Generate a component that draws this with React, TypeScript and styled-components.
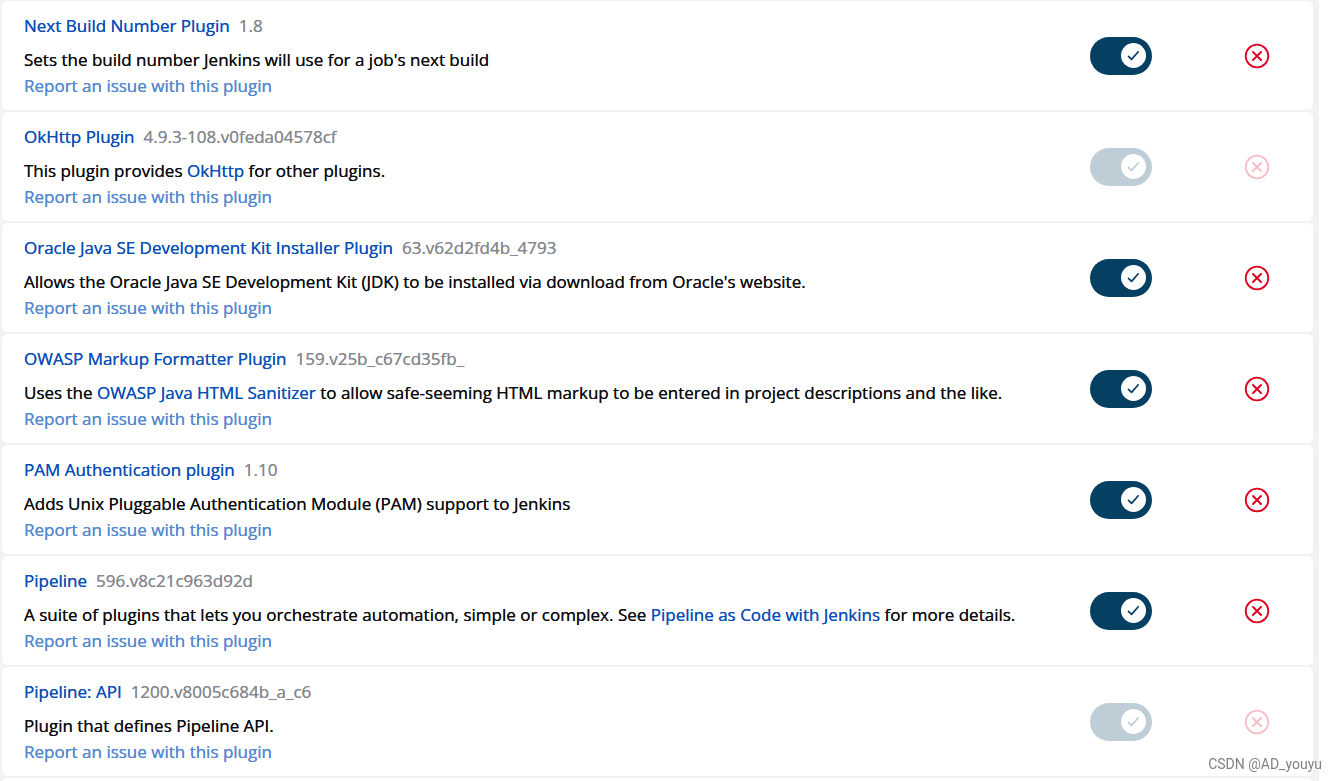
import React, { useState } from "react";
import styled, { createGlobalStyle } from "styled-components";

const GlobalStyle = createGlobalStyle`
  *, *::before, *::after { box-sizing: border-box; }
  html, body { margin: 0; background: #fff; }
  body {
    font-family: "Segoe UI", "Open Sans", "Noto Sans", sans-serif;
    font-size: 17px;
    font-weight: 500;
    line-height: 26px;
    color: #14141f;
  }
`;

const Page = styled.main`
  height: 100vh;
  overflow: hidden;
  padding-right: 18px;
`;

const Panel = styled.div`
  min-height: 100%;
  padding: 1px 6px 0 2px;
  background: #f2f2f2;
`;

const PluginTable = styled.table`
  width: 100%;
  border-collapse: separate;
  border-spacing: 0;
  table-layout: fixed;
`;

const ToggleColumn = styled.col`
  width: 160px;
`;

const UninstallColumn = styled.col`
  width: 112px;
`;

const Cell = styled.td<{ $align?: "left" | "center" }>`
  height: 111px;
  padding: 0;
  border-bottom: 2px solid transparent;
  text-align: ${({ $align }) => $align ?? "left"};
  vertical-align: middle;
  background: #fff;
  background-clip: padding-box;

  &:first-child {
    border-top-left-radius: 5px;
    border-bottom-left-radius: 5px 7px;
  }
  &:last-child {
    border-top-right-radius: 5px;
    border-bottom-right-radius: 5px 7px;
  }
`;

const Details = styled.div`
  padding: 0 22px;
`;

const Heading = styled.div`
  display: flex;
  gap: 9px;
  margin-bottom: 8px;
`;

/* The unblurred shadow thickens the regular face to a medium weight. */
const Link = styled.a`
  color: #084fb8;
  text-decoration: none;
  text-shadow: 0 0 0 currentColor;
`;

const Version = styled.span`
  color: #85888e;
  text-shadow: 0 0 0 currentColor;
`;

const Description = styled.div`
  color: #0d0d10;
  text-shadow: 0 0 0 currentColor;
`;

const ReportLink = styled(Link)`
  display: block;
  width: fit-content;
  color: #5488cf;
`;

const Toggle = styled.label<{ $locked: boolean }>`
  display: inline-grid;
  align-items: center;
  justify-items: end;
  vertical-align: middle;
  opacity: ${({ $locked }) => ($locked ? 0.25 : 1)};
`;

const ToggleInput = styled.input`
  grid-area: 1 / 1;
  appearance: none;
  width: 62px;
  height: 38px;
  margin: 0;
  border-radius: 19px;
  background: #053f61;
`;

const Knob = styled.span`
  grid-area: 1 / 1;
  display: grid;
  place-items: center;
  width: 25px;
  height: 25px;
  margin-right: 6px;
  border-radius: 50%;
  background: #fff;
  pointer-events: none;
`;

const UninstallButton = styled.button`
  display: inline-grid;
  padding: 0;
  border: 0;
  background: none;
  vertical-align: middle;

  &:disabled { opacity: 0.25; }
`;

const Watermark = styled.div`
  position: fixed;
  right: 15px;
  bottom: 7px;
  font-family: Roboto, "Liberation Sans", sans-serif;
  font-size: 14px;
  font-weight: 400;
  line-height: 20px;
  color: #808080;
  text-shadow: 1px 1px 0 #fff;
`;

type Plugin = {
  name: string;
  version: string;
  description: React.ReactNode;
  locked?: boolean;
};

const plugins: Plugin[] = [
  {
    name: "Next Build Number Plugin",
    version: "1.8",
    description: "Sets the build number Jenkins will use for a job's next build",
  },
  {
    name: "OkHttp Plugin",
    version: "4.9.3-108.v0feda04578cf",
    description: <>This plugin provides <Link href="#okhttp">OkHttp</Link> for other plugins.</>,
    locked: true,
  },
  {
    name: "Oracle Java SE Development Kit Installer Plugin",
    version: "63.v62d2fd4b_4793",
    description: "Allows the Oracle Java SE Development Kit (JDK) to be installed via download from Oracle's website.",
  },
  {
    name: "OWASP Markup Formatter Plugin",
    version: "159.v25b_c67cd35fb_",
    description: (
      <>
        Uses the <Link href="#sanitizer">OWASP Java HTML Sanitizer</Link> to allow safe-seeming HTML markup to be
        entered in project descriptions and the like.
      </>
    ),
  },
  {
    name: "PAM Authentication plugin",
    version: "1.10",
    description: "Adds Unix Pluggable Authentication Module (PAM) support to Jenkins",
  },
  {
    name: "Pipeline",
    version: "596.v8c21c963d92d",
    description: (
      <>
        A suite of plugins that lets you orchestrate automation, simple or complex. See{" "}
        <Link href="#pipeline-as-code">Pipeline as Code with Jenkins</Link> for more details.
      </>
    ),
  },
  {
    name: "Pipeline: API",
    version: "1200.v8005c684b_a_c6",
    description: "Plugin that defines Pipeline API.",
    locked: true,
  },
];

function PluginRow({ plugin }: { plugin: Plugin }) {
  const [enabled, setEnabled] = useState(true);
  const locked = Boolean(plugin.locked);
  return (
    <tr>
      <Cell>
        <Details>
          <Heading>
            <Link href="#plugin">{plugin.name}</Link>
            <Version>{plugin.version}</Version>
          </Heading>
          <Description>{plugin.description}</Description>
          <ReportLink href="#report">Report an issue with this plugin</ReportLink>
        </Details>
      </Cell>
      <Cell $align="center">
        <Toggle $locked={locked}>
          <ToggleInput
            type="checkbox"
            aria-label={plugin.name}
            checked={enabled}
            disabled={locked}
            onChange={(event) => setEnabled(event.target.checked)}
          />
          <Knob>
            <svg width="13" height="13" viewBox="0 0 13 13" fill="none" aria-hidden="true">
              <path
                d="M1.5 7.4 4.6 10.4 11.2 2.8"
                stroke="#053f61"
                strokeWidth="1.7"
                strokeLinecap="round"
                strokeLinejoin="round"
              />
            </svg>
          </Knob>
        </Toggle>
      </Cell>
      <Cell $align="center">
        <UninstallButton type="button" disabled={locked} aria-label={`Uninstall ${plugin.name}`}>
          <svg width="26" height="26" viewBox="0 0 26 26" fill="none" aria-hidden="true">
            <circle cx="13" cy="13" r="11.3" stroke="#e0001f" strokeWidth="1.8" />
            <path d="M9 9l8 8M17 9l-8 8" stroke="#e0001f" strokeWidth="2" strokeLinecap="round" />
          </svg>
        </UninstallButton>
      </Cell>
    </tr>
  );
}

export default function App() {
  return (
    <>
      <GlobalStyle />
      <Page>
        <Panel>
          <PluginTable>
            <colgroup>
              <col />
              <ToggleColumn />
              <UninstallColumn />
            </colgroup>
            <tbody>
              {plugins.map((plugin) => (
                <PluginRow key={plugin.name} plugin={plugin} />
              ))}
              <tr>
                <Cell colSpan={3} />
              </tr>
            </tbody>
          </PluginTable>
        </Panel>
      </Page>
      <Watermark>CSDN @AD_youyu</Watermark>
    </>
  );
}
